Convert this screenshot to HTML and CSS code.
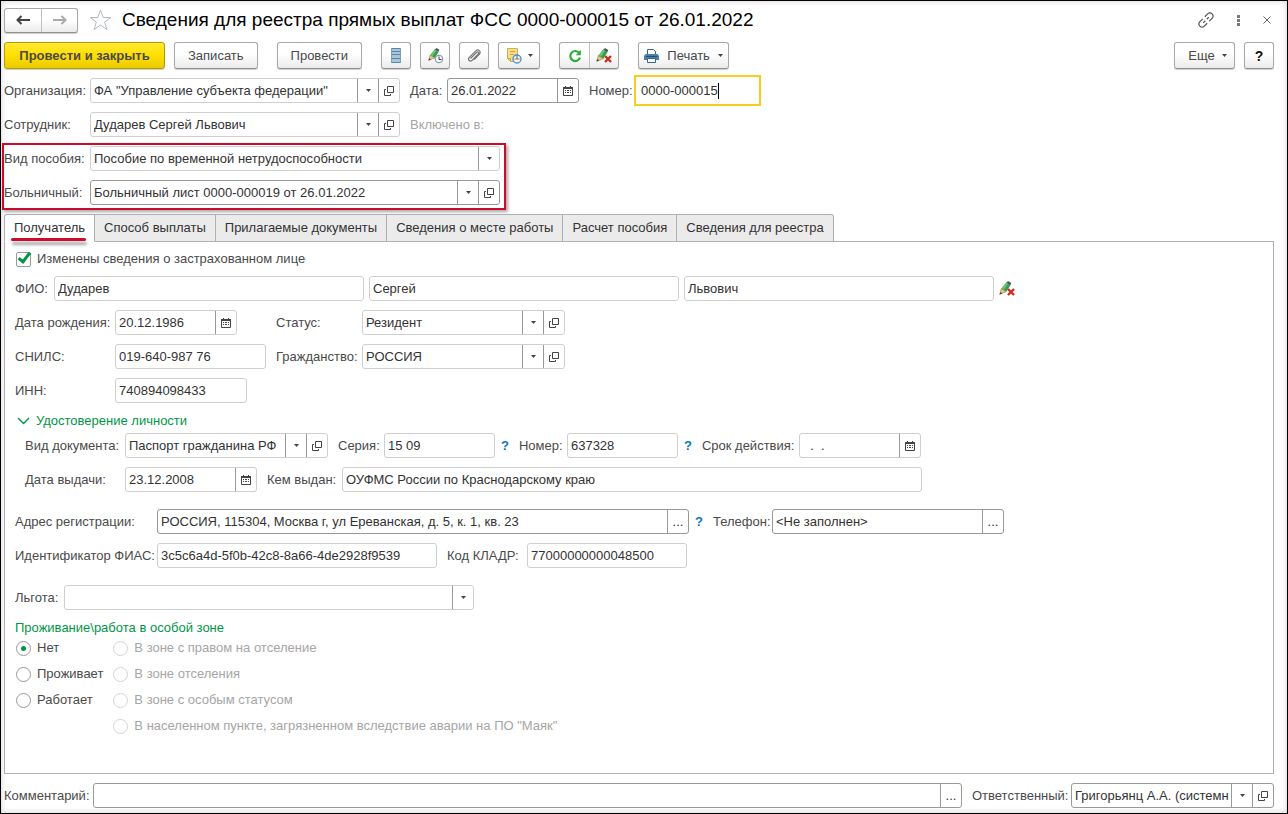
FILE: index.html
```html
<!DOCTYPE html>
<html lang="ru">
<head>
<meta charset="utf-8">
<meta name="viewport" content="width=device-width, initial-scale=1">
<title>Сведения для реестра прямых выплат ФСС</title>
<link rel="stylesheet" href="styles.css">
</head>
<body>
<svg class="sprite" aria-hidden="true">
  <symbol id="i-down" viewBox="0 0 5 3"><path d="M0 0h5L2.500 3z" fill="#444"/></symbol>
  <symbol id="i-open" viewBox="0 0 10 10"><path d="M3.500.5h6v6h-6zM2 3.500H.5v6h6V8" fill="none" stroke="#444"/></symbol>
  <symbol id="i-cal" viewBox="0 0 10 10"><path d="M.5 1.500h9v8h-9z" fill="none" stroke="#444"/><path d="M0 1h10v2H0zM2 0h1v1H2zM7 0h1v1H7zM2 4h1v1H2zM4 4h2v1H4zM7 4h1v1H7zM2 6h1v1H2zM4 6h2v1H4zM7 6h1v1H7z" fill="#444"/></symbol>
  <symbol id="i-pencil" viewBox="0 0 16 16"><path d="M10.300 0L14 2.300 12.800 5 8.300 2.200z" fill="#4a5862"/><path d="M8.300 1.800l4.700 3-4.600 7.400-5.800-3.400z" fill="#36a04d"/><path d="M8.300 1.800l2 1.300-5 7.300-2.700-1.600z" fill="#67c276"/><path d="M2.600 8.800l5.600 3.400L1 15.200z" fill="#edc77c" stroke="#8a6a35" stroke-width=".6"/><path d="M1.500 12.500L.5 15.500l3.300-1.300z" fill="#444"/></symbol>
  <symbol id="i-cross" viewBox="0 0 8 8"><path d="M1 1l6 6M7 1L1 7" stroke="#cf2a22" stroke-width="2.400"/></symbol>
  <symbol id="i-clear" viewBox="0 0 17 15"><use href="#i-pencil" width="14" height="14"/><use href="#i-cross" x="8" y="7" width="8" height="8"/></symbol>
</svg>

<main class="window">
  <header class="titlebar">
    <div class="split nav">
      <button type="button" aria-label="Назад"><svg width="14" height="10" viewBox="0 0 14 10"><path d="M1.500 5H14M5.500 1l-4 4 4 4" fill="none" stroke="#444" stroke-width="2"/></svg></button>
      <button type="button" aria-label="Вперед"><svg width="14" height="10" viewBox="0 0 14 10"><path d="M0 5h12.500M8.500 1l4 4-4 4" fill="none" stroke="#aaa" stroke-width="2"/></svg></button>
    </div>
    <button type="button" class="plain star" aria-label="В избранное"><svg width="23" height="22" viewBox="0 0 23 22"><path d="M11.500 1.200l2.700 7.300h7.600l-6.100 4.600 2.300 7.500-6.500-4.600L5 20.600l2.300-7.500L1.200 8.500h7.600z" fill="none" stroke="#b4b9c0"/></svg></button>
    <h1>Сведения для реестра прямых выплат ФСС 0000-000015 от 26.01.2022</h1>
    <div class="window-tools">
      <button type="button" class="plain" aria-label="Получить ссылку"><svg width="16" height="16" viewBox="0 0 16 16"><g transform="rotate(-45 8 8)" fill="none" stroke="#555" stroke-width="1.200"><path d="M6.500 4.900H2.500A3 3 0 0 0 2.500 11.100h4M9.500 4.900h4a3 3 0 0 1 0 6.200h-4M4 8h3M9 8h3"/></g></svg></button>
      <button type="button" class="plain" aria-label="Меню"><svg width="3" height="11" viewBox="0 0 3 11"><path d="M0 0h3v3H0zM0 4h3v3H0zM0 8h3v3H0z" fill="#777"/></svg></button>
      <button type="button" class="plain" aria-label="Закрыть"><svg width="8" height="8" viewBox="0 0 8 8"><path d="M.5.5l7 7M7.500.5l-7 7" stroke="#666"/></svg></button>
    </div>
  </header>

  <div class="toolbar">
    <button type="button" class="btn primary">Провести и закрыть</button>
    <button type="button" class="btn">Записать</button>
    <button type="button" class="btn group-start">Провести</button>
    <button type="button" class="btn icon group-start" aria-label="Структура"><svg width="10" height="15" viewBox="0 0 10 15"><path d="M0 0h10v15H0z" fill="#a9c5d9"/><path d="M0 .5h10M0 3.500h10M0 6.500h10M0 10.500h10M0 14.500h10" stroke="#5c85a3"/><path d="M.5 0v15M9.500 0v15" stroke="#7d9fb7"/></svg></button>
    <button type="button" class="btn icon" aria-label="Отложенные изменения"><svg width="17" height="16" viewBox="0 0 17 16"><use href="#i-pencil" x="1" width="13" height="13"/><circle cx="12" cy="11" r="3.800" fill="#f4f8fa" stroke="#7890a2"/><path d="M12 8.500V11.500h2.500" fill="none" stroke="#345"/></svg></button>
    <button type="button" class="btn icon" aria-label="Файлы"><svg width="14" height="14" viewBox="0 0 14 14"><path d="M3.500 9.500l6-6c1.600-1.500 3 .3 1.800 1.500l-6 6.200c-2.300 2-5-.4-3-2.800L8.800 1.900c2.500-2.300 5.600.6 3.700 3.200l-5.200 5.500" fill="none" stroke="#777" stroke-width="1.200"/></svg></button>
    <button type="button" class="btn icon menu" aria-label="Создать на основании"><svg width="16" height="16" viewBox="0 0 16 16"><path d="M1.500.5h10v13h-7l-3-3z" fill="#f5dc87" stroke="#d0af55"/><path d="M1.500 10.500h3v3M4 3.500h5M4 6.500h4" fill="none" stroke="#c8a648"/><circle cx="11" cy="11" r="4" fill="#f2f7fc" stroke="#4f8cbd" stroke-width="1.300"/><path d="M11 7.500v3.500" stroke="#376b9c"/><path d="M8.500 11h5" stroke="#cf5a55"/></svg><svg width="5" height="3"><use href="#i-down"/></svg></button>
    <div class="split group-start">
      <button type="button" aria-label="Обновить"><svg width="14" height="14" viewBox="0 0 14 14"><path d="M11.300 4A5 5 0 1 0 12 8.700" fill="none" stroke="#2fab3f" stroke-width="2.200"/><path d="M12.800.8v5.400H7.700z" fill="#2fab3f"/></svg></button>
      <button type="button" aria-label="Отменить изменения"><svg width="17" height="15"><use href="#i-clear"/></svg></button>
    </div>
    <button type="button" class="btn menu print group-start"><svg width="15" height="14" viewBox="0 0 15 14"><path d="M3.500.5h6l2 2V6h-8z" fill="#fff" stroke="#35658a"/><path d="M1.500 5h12L15 7v4H0V7z" fill="#4d7ea3"/><path d="M2 7.500h11" stroke="#234f70"/><path d="M3.500 9.500h8v4h-8z" fill="#fff" stroke="#35658a"/></svg>Печать<svg width="5" height="3"><use href="#i-down"/></svg></button>
    <button type="button" class="btn menu more">Еще<svg width="5" height="3"><use href="#i-down"/></svg></button>
    <button type="button" class="btn icon help-btn" aria-label="Справка">?</button>
  </div>

  <form class="head">
    <div class="row">
      <label for="org">Организация:</label>
      <div class="field w310"><select id="org"><option>ФА "Управление субъекта федерации"</option></select><span class="cell"><svg width="5" height="3"><use href="#i-down"/></svg></span><button type="button" class="cell" aria-label="Открыть"><svg width="10" height="10"><use href="#i-open"/></svg></button></div>
      <label class="next short" for="date">Дата:</label>
      <div class="field strong w132"><input id="date" value="26.01.2022"><button type="button" class="cell" aria-label="Календарь"><svg width="10" height="10"><use href="#i-cal"/></svg></button></div>
      <label class="next" for="num">Номер:</label>
      <div class="field focused"><input id="num" value="0000-000015"><span class="text-caret"></span></div>
    </div>
    <div class="row">
      <label for="emp">Сотрудник:</label>
      <div class="field w310"><select id="emp"><option>Дударев Сергей Львович</option></select><span class="cell"><svg width="5" height="3"><use href="#i-down"/></svg></span><button type="button" class="cell" aria-label="Открыть"><svg width="10" height="10"><use href="#i-open"/></svg></button></div>
      <span class="next muted">Включено в:</span>
    </div>
    <div class="marked">
      <div class="row">
        <label for="kind">Вид пособия:</label>
        <div class="field w410"><select id="kind"><option>Пособие по временной нетрудоспособности</option></select><span class="cell"><svg width="5" height="3"><use href="#i-down"/></svg></span></div>
      </div>
      <div class="row">
        <label for="sick">Больничный:</label>
        <div class="field strong w410"><select id="sick"><option>Больничный лист 0000-000019 от 26.01.2022</option></select><span class="cell"><svg width="5" height="3"><use href="#i-down"/></svg></span><button type="button" class="cell" aria-label="Открыть"><svg width="10" height="10"><use href="#i-open"/></svg></button></div>
      </div>
    </div>
  </form>

  <div class="tabs" role="tablist">
    <button type="button" role="tab" aria-selected="true">Получатель</button>
    <button type="button" role="tab" aria-selected="false">Способ выплаты</button>
    <button type="button" role="tab" aria-selected="false">Прилагаемые документы</button>
    <button type="button" role="tab" aria-selected="false">Сведения о месте работы</button>
    <button type="button" role="tab" aria-selected="false">Расчет пособия</button>
    <button type="button" role="tab" aria-selected="false">Сведения для реестра</button>
  </div>

  <form class="panel" role="tabpanel">
    <label class="choice"><input type="checkbox" checked>Изменены сведения о застрахованном лице</label>

    <div class="row fio">
      <label for="surname">ФИО:</label>
      <div class="field w310"><input id="surname" value="Дударев"></div>
      <div class="field w310"><input aria-label="Имя" value="Сергей"></div>
      <div class="field w310"><input aria-label="Отчество" value="Львович"></div>
      <button type="button" class="plain" aria-label="Очистить ФИО"><svg width="17" height="15"><use href="#i-clear"/></svg></button>
    </div>

    <div class="person">
      <label for="birth">Дата рождения:</label>
      <div class="field w122"><input id="birth" value="20.12.1986"><button type="button" class="cell" aria-label="Календарь"><svg width="10" height="10"><use href="#i-cal"/></svg></button></div>
      <label for="status">Статус:</label>
      <div class="field w203"><select id="status"><option>Резидент</option></select><span class="cell"><svg width="5" height="3"><use href="#i-down"/></svg></span><button type="button" class="cell" aria-label="Открыть"><svg width="10" height="10"><use href="#i-open"/></svg></button></div>
      <label for="snils">СНИЛС:</label>
      <div class="field w151"><input id="snils" value="019-640-987 76"></div>
      <label for="citizen">Гражданство:</label>
      <div class="field w203"><select id="citizen"><option>РОССИЯ</option></select><span class="cell"><svg width="5" height="3"><use href="#i-down"/></svg></span><button type="button" class="cell" aria-label="Открыть"><svg width="10" height="10"><use href="#i-open"/></svg></button></div>
      <label for="inn">ИНН:</label>
      <div class="field w132"><input id="inn" value="740894098433"></div>
    </div>

    <section class="identity">
      <h2><button type="button" class="plain" aria-expanded="true"><svg width="13" height="8" viewBox="0 0 13 8"><path d="M1 1l5.500 5.500L12 1" fill="none" stroke="#009646" stroke-width="1.400"/></svg>Удостоверение личности</button></h2>
      <div class="row">
        <label for="doc">Вид документа:</label>
        <div class="field w203"><select id="doc"><option>Паспорт гражданина РФ</option></select><span class="cell"><svg width="5" height="3"><use href="#i-down"/></svg></span><button type="button" class="cell" aria-label="Открыть"><svg width="10" height="10"><use href="#i-open"/></svg></button></div>
        <label class="next" for="series">Серия:</label>
        <div class="field w111"><input id="series" value="15 09"></div>
        <button type="button" class="plain hint">?</button>
        <label class="next" for="docnum">Номер:</label>
        <div class="field w111"><input id="docnum" value="637328"></div>
        <button type="button" class="plain hint">?</button>
        <label class="next wide" for="valid">Срок действия:</label>
        <div class="field w122"><input id="valid" value="  .  ."><button type="button" class="cell" aria-label="Календарь"><svg width="10" height="10"><use href="#i-cal"/></svg></button></div>
      </div>
      <div class="row">
        <label for="issued">Дата выдачи:</label>
        <div class="field w132"><input id="issued" value="23.12.2008"><button type="button" class="cell" aria-label="Календарь"><svg width="10" height="10"><use href="#i-cal"/></svg></button></div>
        <label class="next" for="issuer">Кем выдан:</label>
        <div class="field w580"><input id="issuer" value="ОУФМС России по Краснодарскому краю"></div>
      </div>
    </section>

    <section class="address">
      <div class="row">
        <label for="addr">Адрес регистрации:</label>
        <div class="field strong w532"><input id="addr" value="РОССИЯ, 115304, Москва г, ул Ереванская, д. 5, к. 1, кв. 23"><button type="button" class="cell" aria-label="Выбрать">...</button></div>
        <button type="button" class="plain hint">?</button>
        <label class="next" for="phone">Телефон:</label>
        <div class="field strong w232"><input id="phone" value="&lt;Не заполнен&gt;"><button type="button" class="cell" aria-label="Выбрать">...</button></div>
      </div>
      <div class="row">
        <label for="fias">Идентификатор ФИАС:</label>
        <div class="field w280"><input id="fias" value="3c5c6a4d-5f0b-42c8-8a66-4de2928f9539"></div>
        <label class="next" for="kladr">Код КЛАДР:</label>
        <div class="field w160"><input id="kladr" value="77000000000048500"></div>
      </div>
    </section>

    <div class="row benefit">
      <label for="benefit">Льгота:</label>
      <div class="field w410"><select id="benefit"><option></option></select><span class="cell"><svg width="5" height="3"><use href="#i-down"/></svg></span></div>
    </div>

    <section class="zone">
      <h2>Проживание\работа в особой зоне</h2>
      <div class="choices">
        <div class="choice-column">
          <label class="choice"><input type="radio" name="zone" checked>Нет</label>
          <label class="choice"><input type="radio" name="zone">Проживает</label>
          <label class="choice"><input type="radio" name="zone">Работает</label>
        </div>
        <div class="choice-column">
          <label class="choice"><input type="radio" name="area" disabled>В зоне с правом на отселение</label>
          <label class="choice"><input type="radio" name="area" disabled>В зоне отселения</label>
          <label class="choice"><input type="radio" name="area" disabled>В зоне с особым статусом</label>
          <label class="choice"><input type="radio" name="area" disabled>В населенном пункте, загрязненном вследствие аварии на ПО "Маяк"</label>
        </div>
      </div>
    </section>
  </form>

  <footer class="row foot">
    <label for="comment">Комментарий:</label>
    <div class="field strong grow"><input id="comment"><button type="button" class="cell" aria-label="Выбрать">...</button></div>
    <label class="next resp" for="resp">Ответственный:</label>
    <div class="field strong w203"><select id="resp"><option>Григорьянц А.А. (системн</option></select><span class="cell"><svg width="5" height="3"><use href="#i-down"/></svg></span><button type="button" class="cell" aria-label="Открыть"><svg width="10" height="10"><use href="#i-open"/></svg></button></div>
  </footer>
</main>
</body>
</html>
```

FILE: styles.css
```css
*, *::before, *::after { box-sizing: border-box; }

body {
  margin: 0;
  background: #fff;
  color: #4a4a4a;
  font: 13px/16px "Liberation Sans", Arial, sans-serif;
}

button, input, select { margin: 0; font: inherit; color: inherit; }
button { padding: 0; white-space: nowrap; }
svg { display: block; flex: none; }
.sprite { position: absolute; width: 0; height: 0; }

.window {
  display: flex;
  flex-direction: column;
  min-height: 100vh;
  padding: 7px 13px 5px 3px;
  border: 1px solid #000;
  box-shadow: inset 0 0 6px #d8d0d4;
}

/* Title bar */
.titlebar { display: flex; align-items: center; height: 24px; }
h1 { margin: 0 0 0 10px; font-size: 19px; line-height: 24px; font-weight: 400; color: #000; white-space: nowrap; }
.plain { display: flex; align-items: center; border: 0; background: none; }
.star { margin-left: 11px; }
.window-tools { display: flex; align-items: center; gap: 23px; margin-left: auto; padding-right: 3px; }

/* Buttons */
.btn, .split {
  height: 27px;
  border: 1px solid #a9a9a9;
  border-bottom-color: #909090;
  border-radius: 3px;
  background: linear-gradient(#fff 45%, #ebebeb);
  box-shadow: 0 1px 1px #ccc;
}
.btn { display: flex; align-items: center; justify-content: center; padding: 0 13px; }
.btn.primary {
  width: 161px;
  padding: 0;
  border-color: #b39a00;
  background: linear-gradient(#ffe932, #ffdf00 50%, #e9cb00);
  font-weight: 700;
}
.btn.icon { width: 30px; padding: 0; }
.btn.icon.menu { width: 42px; gap: 6px; }
.btn.print { width: 91px; padding: 0; gap: 8px; }
.btn.more { width: 61px; padding: 0 0 0 6px; gap: 7px; margin-left: auto; }
.btn.help-btn { font-size: 14px; font-weight: 700; color: #111; }
.split { display: flex; }
.split button { display: flex; align-items: center; justify-content: center; width: 29px; border: 0; background: none; }
.split button + button { border-left: 1px solid #c0c0c0; }
.nav { height: 25px; }
.nav button { width: 36px; }
.toolbar { display: flex; gap: 9px; margin-top: 10px; }
.toolbar .group-start { margin-left: 10px; }

/* Fields */
.row { display: flex; align-items: center; }
.row label, .person label { white-space: nowrap; flex: none; }
.row .next { margin-left: 10px; }
.field {
  display: flex;
  height: 25px;
  border: 1px solid #cfcfcf;
  border-radius: 3px;
  background: #fff;
  color: #333;
}
.field.strong { border-color: #999; }
.field input, .field select {
  flex: 1;
  min-width: 0;
  padding: 0 0 0 3px;
  border: 0;
  outline: 0;
  background: none;
  appearance: none;
}
.cell {
  display: flex;
  align-items: center;
  justify-content: center;
  flex: none;
  width: 21px;
  border: 0;
  border-left: 1px solid #999;
  background: none;
}
.w111 { width: 111px; }
.w122 { width: 122px; }
.w132 { width: 132px; }
.w151 { width: 151px; }
.w160 { width: 160px; }
.w203 { width: 203px; }
.w232 { width: 232px; }
.w280 { width: 280px; }
.w310 { width: 310px; }
.w410 { width: 410px; }
.w532 { width: 532px; }
.w580 { width: 580px; }
.grow { flex: 1; }

.focused { width: 127px; height: 31px; margin: -3px 0; align-items: center; border: 2px solid #f9cd1c; border-radius: 0; }
.field.focused input { flex: none; field-sizing: content; padding-left: 5px; }
.text-caret { width: 1px; height: 16px; background: #000; }
.muted { color: #a6a6a6; }

.head, .marked { display: flex; flex-direction: column; gap: 9px; }
.head { margin-top: 9px; }
.head .row > label:first-child { width: 86px; }
.head label.short { width: 37px; }
.head label.next:not(.short) { width: 45px; }
.marked { position: relative; }
.marked::after {
  content: "";
  position: absolute;
  top: -3px;
  left: -2px;
  width: 504px;
  bottom: -5px;
  border: 2px solid #cc0a2b;
  box-shadow: 2px 2px 3px rgba(0, 0, 0, .35);
  pointer-events: none;
}

/* Tabs */
.tabs { display: flex; margin-top: 9px; }
.tabs button {
  position: relative;
  height: 28px;
  padding: 0 9px;
  border: 1px solid #b0b0b0;
  border-left-width: 0;
  background: #ebebeb;
  color: #333;
}
.tabs button:first-child { border-left-width: 1px; border-radius: 3px 0 0 0; }
.tabs button:last-child { border-radius: 0 3px 0 0; }
.tabs [aria-selected="true"] { background: #fff; border-bottom-color: #fff; }
.tabs [aria-selected="true"]::after {
  content: "";
  position: absolute;
  left: 6px;
  right: 8px;
  bottom: 0;
  height: 3px;
  border-radius: 2px;
  background: #cf0a2b;
  box-shadow: 1px 4px 3px rgba(0, 0, 0, .35);
}

/* Panel */
.panel { flex: 1; margin-top: -1px; padding: 9px 10px 12px; border: 1px solid #b0b0b0; }
.choice { display: flex; align-items: center; gap: 6px; width: max-content; height: 16px; }
.choice input {
  display: grid;
  place-content: center;
  width: 15px;
  height: 15px;
  margin-left: 1px;
  border: 1px solid #999;
  background: #fff;
  appearance: none;
}
.choice [type="checkbox"] { border-radius: 2px; }
.choice [type="checkbox"]:checked::before {
  content: "";
  width: 7px;
  height: 13px;
  margin: -6px 0 0 2px;
  border: solid #009646;
  border-width: 0 3px 3px 0;
  transform: rotate(38deg);
}
.choice [type="radio"] { border-radius: 50%; }
.choice [type="radio"]:checked::before { content: ""; width: 5px; height: 5px; border-radius: 50%; background: #009646; }
.choice:has(:disabled) { color: #a6a6a6; }
.choice :disabled { border-color: #d4d4d4; }

.fio { gap: 5px; margin-top: 9px; }
.fio label { width: 34px; }
.person {
  display: grid;
  grid-template-columns: 100px 161px 86px max-content;
  row-gap: 9px;
  align-items: center;
  margin-top: 9px;
}
h2 { margin: 0; font-size: 13px; line-height: 16px; font-weight: 400; color: #009646; }
h2 .plain { gap: 6px; padding-left: 2px; }
.identity { display: flex; flex-direction: column; gap: 9px; margin-top: 10px; }
.identity h2 { margin-bottom: -5px; }
.identity .row { padding-left: 10px; }
.identity .row > label:first-child { width: 100px; }
.identity label.next { width: 46px; }
.identity label.wide { width: 97px; }
.identity label[for="docnum"] { width: 48px; }
.identity label[for="issuer"] { width: 75px; }
.hint { margin-left: 6px; color: #0b78bf; font-weight: 700; }
.address { display: flex; flex-direction: column; gap: 9px; margin-top: 17px; }
.address .row > label:first-child { width: 142px; }
.address label[for="phone"] { width: 59px; }
.address label[for="kladr"] { width: 80px; }
.benefit { margin-top: 17px; }
.benefit label { width: 49px; }
.zone { margin-top: 10px; }
.choices { display: flex; gap: 9px; margin-top: 4px; }
.choice-column { display: flex; flex-direction: column; gap: 10px; }

.foot { margin-top: 9px; }
.foot > label:first-child { width: 89px; }
.foot .resp { width: 99px; }
```
